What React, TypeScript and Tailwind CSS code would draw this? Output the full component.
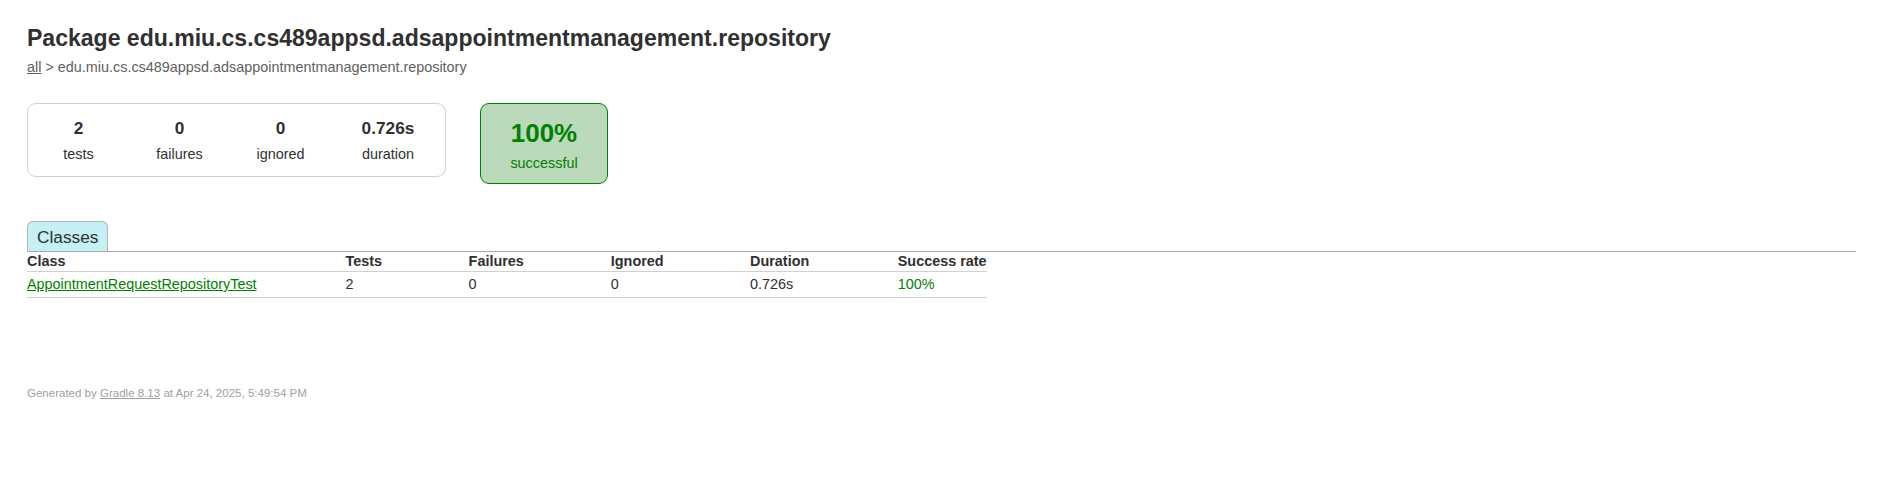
import React from "react";

const stats = [
  { value: "2", label: "tests", w: "w-[101px]" },
  { value: "0", label: "failures", w: "w-[101px]" },
  { value: "0", label: "ignored", w: "w-[101px]" },
  { value: "0.726s", label: "duration", w: "w-[114px]" },
];

export default function App() {
  return (
    <div
      className="w-[1892px] h-[502px] bg-white text-[#303030] text-[14.4px] leading-[16.5px] pt-[25px] pl-[27px] pr-[27px] overflow-hidden"
      style={{ fontFamily: '"Liberation Sans", Arial, Helvetica, sans-serif' }}
    >
      <h1 className="text-[23.04px] leading-[26px] font-bold whitespace-nowrap">
        Package edu.miu.cs.cs489appsd.adsappointmentmanagement.repository
      </h1>
      <div className="mt-[8px] leading-[17px] text-[#606060] whitespace-nowrap">
        <a href="#" className="underline text-[#606060]">
          all
        </a>{" "}
        &gt; edu.miu.cs.cs489appsd.adsappointmentmanagement.repository
      </div>

      <div className="mt-[27px] flex items-start">
        <div className="flex border border-[#d0d0d0] rounded-[9px]">
          {stats.map((s) => (
            <div key={s.label} className={`${s.w} text-center pt-[14.4px] pb-[13.4px]`}>
              <div className="text-[17.28px] leading-[20px] font-bold mb-[8px]">{s.value}</div>
              <p className="leading-[16.5px]">{s.label}</p>
            </div>
          ))}
        </div>
        <div className="ml-[34px] w-[128px] border border-[#008000] rounded-[9px] bg-[#bbd9bb] text-center text-[#008000] pt-[13.5px] pb-[12px]">
          <div className="text-[25.92px] leading-[30px] font-bold mb-[7px]">100%</div>
          <p className="leading-[16.5px]">successful</p>
        </div>
      </div>

      <div className="mt-[37px] mr-[9px] flex border-b border-[#a8a8a8]">
        <div className="border border-b-0 border-[#b4b4b4] rounded-t-[6px] bg-[#c5f0f5] pl-[9px] pr-[9px] pt-[4.5px] pb-[4.5px] text-[17.28px] leading-[20px]">
          Classes
        </div>
      </div>

      <table className="border-collapse whitespace-nowrap">
        <thead>
          <tr>
            <th className="text-left font-bold pt-[1px] pb-[1px] pl-0 border-b border-[#d0d0d0]">Class</th>
            <th className="text-left font-bold pt-[1px] pb-[1px] pl-[89px] border-b border-[#d0d0d0]">Tests</th>
            <th className="text-left font-bold pt-[1px] pb-[1px] pl-[86.5px] border-b border-[#d0d0d0]">Failures</th>
            <th className="text-left font-bold pt-[1px] pb-[1px] pl-[87px] border-b border-[#d0d0d0]">Ignored</th>
            <th className="text-left font-bold pt-[1px] pb-[1px] pl-[86.5px] border-b border-[#d0d0d0]">Duration</th>
            <th className="text-left font-bold pt-[1px] pb-[1px] pl-[88.5px] border-b border-[#d0d0d0]">Success rate</th>
          </tr>
        </thead>
        <tbody>
          <tr>
            <td className="pt-[4.5px] pb-[4.5px] pl-0 border-b border-[#d0d0d0]">
              <a href="#" className="underline text-[#008000]">
                AppointmentRequestRepositoryTest
              </a>
            </td>
            <td className="pt-[4.5px] pb-[4.5px] pl-[89px] border-b border-[#d0d0d0]">2</td>
            <td className="pt-[4.5px] pb-[4.5px] pl-[86.5px] border-b border-[#d0d0d0]">0</td>
            <td className="pt-[4.5px] pb-[4.5px] pl-[87px] border-b border-[#d0d0d0]">0</td>
            <td className="pt-[4.5px] pb-[4.5px] pl-[86.5px] border-b border-[#d0d0d0]">0.726s</td>
            <td className="pt-[4.5px] pb-[4.5px] pl-[88.5px] border-b border-[#d0d0d0] text-[#008000]">100%</td>
          </tr>
        </tbody>
      </table>

      <div className="mt-[89px] text-[11.52px] leading-[13.25px] text-[#a0a0a0] whitespace-nowrap">
        Generated by{" "}
        <a href="#" className="underline text-[#a0a0a0]">
          Gradle 8.13
        </a>{" "}
        at Apr 24, 2025, 5:49:54 PM
      </div>
    </div>
  );
}
